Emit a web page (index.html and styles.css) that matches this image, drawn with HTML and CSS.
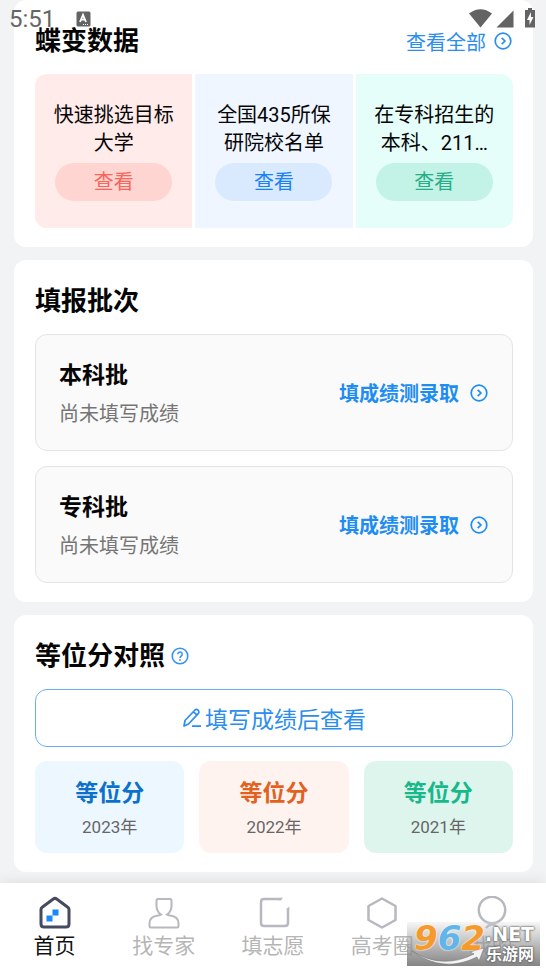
FILE: index.html
```html
<!DOCTYPE html>
<html lang="zh-CN">
<head>
<meta charset="utf-8">
<meta name="viewport" content="width=device-width, initial-scale=1">
<title>蝶变数据</title>
<link rel="stylesheet" href="styles.css">
</head>
<body>
<svg class="defs" aria-hidden="true">
  <symbol id="go" viewBox="0 0 18 18"><circle cx="9" cy="9" r="7.8" fill="none" stroke="currentColor" stroke-width="1.7"/><path d="M7.7 5.8 10.9 9l-3.2 3.2" fill="none" stroke="currentColor" stroke-width="1.7"/></symbol>
</svg>

<div class="status">
  <span class="clock">5:51</span>
  <svg class="badge" viewBox="0 0 15 16"><rect width="14" height="15" x=".5" y=".5" rx="1.5" fill="#636363"/><path d="M4 11 7 3.8 10 11M5 8.7h4" fill="none" stroke="#fff" stroke-width="1.8"/><path d="M7 13.5h1m1 0h1m1 0h1" stroke="#fff" stroke-width="1"/></svg>
  <svg class="signals" viewBox="0 0 70 22">
    <path d="M1 5.500Q12.500-3 24 5.500L12.500 19.500Z" fill="#636363"/>
    <path d="M45.500 2.500v17h-17Z" fill="#636363"/>
    <path d="M57 2h3V0h4v2h3v17.500H57Z" fill="#636363"/>
    <path d="m63 4-4 8h2.500v5l4-8H63Z" fill="#fff"/>
  </svg>
</div>

<main class="page">
  <section class="card">
    <header class="head">
      <h2>蝶变数据</h2>
      <a class="all" href="#all">查看全部<svg class="go"><use href="#go"/></svg></a>
    </header>
    <div class="picks">
      <article class="pick red"><p>快速挑选目标大学</p><button type="button">查看</button></article>
      <article class="pick blue"><p>全国435所保研院校名单</p><button type="button">查看</button></article>
      <article class="pick green"><p>在专科招生的本科、211…</p><button type="button">查看</button></article>
    </div>
  </section>

  <section class="card">
    <header class="head"><h2>填报批次</h2></header>
    <div class="batches">
      <article class="batch">
        <div><h3>本科批</h3><p>尚未填写成绩</p></div>
        <a href="#undergraduate">填成绩测录取<svg class="go"><use href="#go"/></svg></a>
      </article>
      <article class="batch">
        <div><h3>专科批</h3><p>尚未填写成绩</p></div>
        <a href="#college">填成绩测录取<svg class="go"><use href="#go"/></svg></a>
      </article>
    </div>
  </section>

  <section class="card">
    <header class="head compare">
      <h2>等位分对照</h2>
      <button class="help" type="button" aria-label="帮助"><svg viewBox="0 0 18 18"><circle cx="9" cy="9" r="7.800" fill="none" stroke="currentColor" stroke-width="1.600"/><path d="M6.800 7.200a2.200 2.200 0 1 1 3.400 1.800C9.300 9.600 9 9.900 9 11" fill="none" stroke="currentColor" stroke-width="1.500"/><circle cx="9" cy="13" r=".9" fill="currentColor"/></svg></button>
    </header>
    <button class="fill" type="button"><svg viewBox="0 0 20 20"><path d="m2 18 1-5.500L13 2q1.500-1.200 3 .2t.4 3.200L6.500 16ZM11.500 3.800l3.600 3.400M10 18.200h9" fill="none" stroke="currentColor" stroke-width="1.700" stroke-linejoin="round"/></svg>填写成绩后查看</button>
    <div class="years">
      <article class="year y23"><h3>等位分</h3><p>2023年</p></article>
      <article class="year y22"><h3>等位分</h3><p>2022年</p></article>
      <article class="year y21"><h3>等位分</h3><p>2021年</p></article>
    </div>
  </section>
</main>

<nav class="tabs">
  <a class="active" href="#home"><svg viewBox="0 0 34 34"><path d="M3 13.500q0-1.500 1.200-2.300L15.300 3q1.700-1.200 3.400 0l11.100 8.200q1.200.8 1.200 2.300V28q0 3-3 3H6q-3 0-3-3Z" fill="none" stroke="#454a60" stroke-width="3"/><path d="M14.500 13.500h6v6h-6ZM8.500 19.500h6v6h-6Z" fill="#1989fa"/></svg>首页</a>
  <a href="#expert"><svg viewBox="0 0 34 34"><path d="M11 3h12q1.500 0 1.500 1.500V10q0 5.500-4.500 8.500 2 1 3 1 8.500 1 8.500 8v2.500q0 1.500-1.500 1.500H4q-1.500 0-1.500-1.500v-2.500q0-7 8.500-8 1 0 3-1-4.500-3-4.500-8.500V4.500Q9.500 3 11 3Z" fill="none" stroke="#b7b8c0" stroke-width="2"/></svg>找专家</a>
  <a href="#wish"><svg viewBox="0 0 34 34"><path d="M25.500 3H8Q5 3 5 6v21q0 3 3 3h21q3 0 3-3V12" fill="none" stroke="#b7b8c0" stroke-width="2.500"/><path d="m25 1.800h2L24.500 4.200H22ZM30.800 13l2.400-2.500V14h-2.400Z" fill="#b7b8c0"/></svg>填志愿</a>
  <a href="#circle"><svg viewBox="0 0 34 34"><path d="m17 2.500 13.500 7.500v14L17 31.500 3.500 24V10Z" fill="none" stroke="#b7b8c0" stroke-width="2.500" stroke-linejoin="round"/></svg>高考圈</a>
  <a href="#me"><svg viewBox="0 0 34 34"><circle cx="18" cy="14" r="13.200" fill="none" stroke="#b7b8c0" stroke-width="2.500"/><path d="M12 32q6-7 12 0" fill="none" stroke="#b7b8c0" stroke-width="2.500"/></svg>我的</a>
</nav>

<div class="mark">
  <svg class="swoosh" viewBox="0 0 80 20"><path d="M2 5Q32 24 64 8L60 6 74 2 69 15 67 11Q33 28 2 5Z" fill="#f4f4f4" stroke="#777" stroke-width=".6"/></svg>
  <strong class="num"><span>9</span><span class="six">6</span><span>2</span></strong>
  <div class="site"><b>.NET</b><span>乐游网</span></div>
</div>
</body>
</html>
```
FILE: styles.css
```css
* { box-sizing: border-box; }

body {
  margin: 0;
  min-height: 100vh;
  position: relative;
  display: flex;
  flex-direction: column;
  background: #f1f3f5;
  color: #050505;
  font-family: Roboto, "Noto Sans CJK SC", sans-serif;
  font-size: 20px;
}

h2, h3, p { margin: 0; }
a { color: inherit; text-decoration: none; }
button { font: inherit; border: 0; background: none; padding: 0; cursor: pointer; }
svg { display: block; flex: none; }
.defs { position: absolute; width: 0; height: 0; }

.status {
  position: absolute;
  inset: 0 0 auto;
  z-index: 2;
  display: flex;
  align-items: center;
  height: 38px;
  padding: 0 8px 0 9px;
  color: #666;
  pointer-events: none;
}
.clock { font-size: 24px; }
.badge { width: 15px; height: 16px; margin-left: 21px; }
.signals { width: 70px; height: 22px; margin-left: auto; }

.page {
  flex: none;
  display: flex;
  flex-direction: column;
  gap: 13px;
  padding: 0 13px 11px 14px;
}
.card { background: #fff; border-radius: 12px; padding: 21px 20px 19px 21px; }

.head { display: flex; align-items: center; justify-content: space-between; height: 40px; }
.head h2 { font-size: 26px; line-height: 40px; }
.head.compare { justify-content: flex-start; gap: 6px; }
.help { color: #3492f4; }
.help svg { width: 18px; height: 18px; }
.all { display: flex; align-items: center; gap: 8px; padding-right: 1px; color: #2b8eee; }
.go { width: 18px; height: 18px; }

.picks {
  display: grid;
  grid-template-columns: repeat(3, 1fr);
  gap: 3px;
  margin-top: 13px;
  border-radius: 12px;
  overflow: hidden;
}
.pick {
  display: flex;
  flex-direction: column;
  align-items: center;
  padding: 27px 18px 27px;
  text-align: center;
}
.pick p { line-height: 28px; height: 56px; }
.pick button { width: 117px; height: 38px; margin-top: 6px; border-radius: 19px; line-height: 38px; }
.red { background: #ffebe9; }
.red button { background: #ffd5d2; color: #f8655a; }
.blue { background: #eff6ff; }
.blue button { background: #d9eaff; color: #1980f5; }
.green { background: #e6fef9; }
.green button { background: #c3f2e6; color: #25ae88; }

.batches { display: grid; gap: 15px; margin-top: 13px; }
.batch {
  display: flex;
  align-items: center;
  justify-content: space-between;
  height: 117px;
  padding: 0 24px 0 23px;
  background: #fafafa;
  border: 1px solid #e3e4e5;
  border-radius: 12px;
}
.batch div { padding-top: 3px; }
.batch h3 { font-size: 23px; line-height: 40px; }
.batch p { line-height: 36px; color: #757575; }
.batch a { display: flex; align-items: center; gap: 11px; color: #1e8df2; font-weight: 700; }

.fill {
  display: flex;
  align-items: center;
  justify-content: center;
  gap: 3px;
  width: 100%;
  height: 58px;
  margin-top: 13px;
  border: 1px solid #69aef2;
  border-radius: 12px;
  color: #2b8eee;
  font-size: 23px;
}
.fill svg { width: 20px; height: 20px; }

.years { display: grid; grid-template-columns: repeat(3, 1fr); gap: 15px; margin-top: 14px; }
.year { padding: 15px 0 11px; border-radius: 12px; text-align: center; }
.year h3 { font-size: 23px; line-height: 36px; }
.year p { font-size: 17px; line-height: 30px; color: #666; }
.y23 { background: #edf7ff; }
.y23 h3 { color: #0b71cb; }
.y22 { background: #fff3ef; }
.y22 h3 { color: #e3611f; }
.y21 { background: #def5ee; }
.y21 h3 { color: #17b98a; }

.tabs {
  flex: 1 0 auto;
  display: grid;
  grid-template-columns: repeat(5, 1fr);
  padding: 13px 0 9px;
  background: #fff;
  box-shadow: 0 0 14px rgba(0, 0, 0, 0.1);
}
.tabs a {
  display: flex;
  flex-direction: column;
  align-items: center;
  color: #b5b5b5;
  font-size: 21px;
  line-height: 32px;
}
.tabs svg { width: 34px; height: 34px; }
.tabs .active { color: #111; }

.mark {
  position: absolute;
  right: 6px;
  bottom: 6px;
  display: flex;
  width: 133px;
  height: 44px;
  padding-left: 7px;
  background: linear-gradient(rgba(225, 225, 225, 0.3), rgba(125, 125, 125, 0.95));
  font-family: "DejaVu Sans", "Noto Sans CJK SC", sans-serif;
}
.swoosh { position: absolute; left: 3px; bottom: 0; width: 80px; height: 20px; }
.num {
  position: relative;
  font-size: 34px;
  font-style: italic;
  line-height: 32px;
  color: #f79a2c;
  text-shadow: 0 0 1px #fff, 0 0 2px #fff;
}
.six { color: #62b5e8; }
.site {
  position: relative;
  display: flex;
  flex-direction: column;
  align-items: flex-end;
  color: #fff;
  text-shadow: 0 0 2px #555, 0 0 2px #555;
}
.site b { font-size: 19px; line-height: 24px; }
.site span { font-size: 16px; line-height: 18px; font-weight: 700; }
```
